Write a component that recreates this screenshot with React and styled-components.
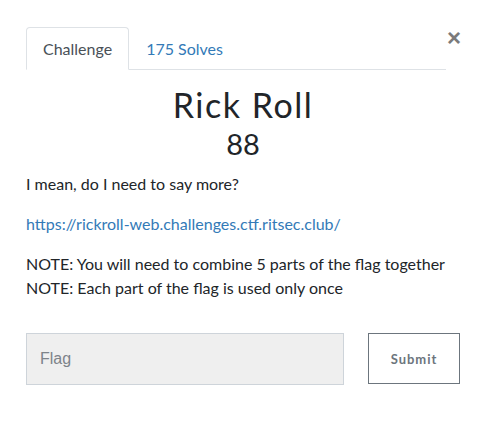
import styled, { createGlobalStyle } from "styled-components";

const Global = createGlobalStyle`
  body {
    margin: 0;
    background: #fff;
    font-family: Lato, "Liberation Sans", sans-serif;
    color: #212529;
  }
`;

const Modal = styled.div`
  width: 485px;
  height: 432px;
  box-sizing: border-box;
  padding: 27px 25px 0 26px;
  position: relative;
`;

const Close = styled.button`
  position: absolute;
  top: 26px;
  right: 24px;
  border: none;
  background: none;
  padding: 0;
  font-family: "Liberation Sans", Arial, sans-serif;
  font-size: 24px;
  font-weight: 700;
  line-height: 24px;
  color: #7b7b7b;
  cursor: pointer;
`;

const Tabs = styled.ul`
  display: flex;
  list-style: none;
  margin: 0;
  padding: 0;
  width: 420px;
  border-bottom: 1px solid #dee2e6;
`;

const Tab = styled.li`
  margin-bottom: -1px;
  padding: 0 16px;
  height: 41px;
  display: flex;
  align-items: center;
  font-size: 16px;
  border: 1px solid ${(p) => (p.$active ? "#dee2e6" : "transparent")};
  border-bottom-color: ${(p) => (p.$active ? "#fff" : "transparent")};
  border-radius: 4px 4px 0 0;
  background: ${(p) => (p.$active ? "#fff" : "transparent")};
  color: ${(p) => (p.$active ? "#495057" : "#337ab7")};
`;

const Title = styled.h2`
  margin: 17px 0 0;
  text-align: center;
  font-family: Lato, sans-serif;
  font-weight: 400;
  font-size: 34px;
  line-height: 36px;
  letter-spacing: 1.5px;
  color: #212529;
`;

const Value = styled.h3`
  margin: 5px 0 0;
  text-align: center;
  font-family: Lato, sans-serif;
  font-weight: 400;
  font-size: 29px;
  line-height: 32px;
  color: #212529;
`;

const Desc = styled.div`
  margin-top: 12px;
  font-size: 16px;
  line-height: 24px;
  & p {
    margin: 0 0 16px;
  }
  & a {
    color: #337ab7;
    text-decoration: none;
  }
`;

const Form = styled.form`
  display: flex;
  gap: 24px;
  margin-top: 33px;
`;

const Input = styled.input`
  width: 318px;
  height: 52px;
  box-sizing: border-box;
  border: 1px solid #ced4da;
  background: #efefef;
  padding: 0 13px;
  font-family: "Liberation Sans", Arial, sans-serif;
  font-size: 16px;
  color: #495057;
  &::placeholder {
    color: #7d838a;
  }
`;

const Submit = styled.button`
  width: 92px;
  height: 51px;
  box-sizing: border-box;
  border: 1px solid #6c757d;
  background: #fff;
  font-family: Lato, sans-serif;
  font-weight: 700;
  font-size: 13px;
  letter-spacing: 1px;
  color: #6c757d;
`;

export default function App() {
  return (
    <>
      <Global />
      <Modal>
        <Close>×</Close>
        <Tabs>
          <Tab $active>Challenge</Tab>
          <Tab>175 Solves</Tab>
        </Tabs>
        <Title>Rick Roll</Title>
        <Value>88</Value>
        <Desc>
          <p>I mean, do I need to say more?</p>
          <p>
            <a href="#">https://rickroll-web.challenges.ctf.ritsec.club/</a>
          </p>
          <p>
            NOTE: You will need to combine 5 parts of the flag together
            <br />
            NOTE: Each part of the flag is used only once
          </p>
        </Desc>
        <Form onSubmit={(e) => e.preventDefault()}>
          <Input placeholder="Flag" />
          <Submit type="submit">Submit</Submit>
        </Form>
      </Modal>
    </>
  );
}
